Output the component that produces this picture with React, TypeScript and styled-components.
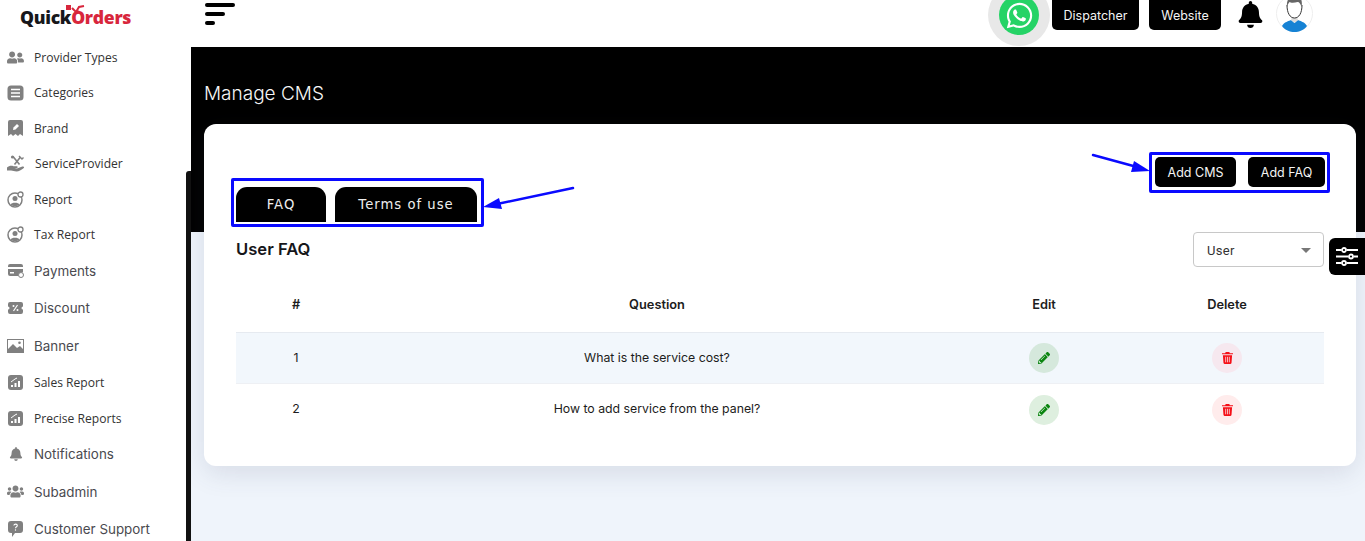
import React from "react";
import styled, { createGlobalStyle } from "styled-components";
import { FaBell, FaPencilAlt, FaUserFriends, FaUsers, FaWhatsapp } from "react-icons/fa";

const GlobalStyle = createGlobalStyle`
  html, body {
    margin: 0;
    height: 100%;
    overflow: hidden;
    background: #fff;
    font-family: "Inter", "Liberation Sans", sans-serif;
  }
  * { box-sizing: border-box; }
`;

const Page = styled.div`
  display: flex;
  height: 541px;
  overflow: hidden;
  position: relative;
`;

const Sidebar = styled.aside`
  background: #fff;
  flex: 0 0 191px;
  overflow: hidden;
  position: relative;
`;

const ScrollThumb = styled.div`
  background: #111;
  border-radius: 3px 0 0 0;
  bottom: 0;
  position: absolute;
  right: 0;
  top: 171px;
  width: 5px;
`;

const Logo = styled.div`
  align-items: flex-end;
  display: flex;
  font-family: "Open Sans", sans-serif;
  font-size: 17.6px;
  font-weight: 800;
  height: 39px;
  letter-spacing: -0.3px;
  line-height: 1;
  padding: 0 0 12px 20px;
  position: relative;
`;

const LogoBlack = styled.span`
  color: #17171b;
`;

const LogoRed = styled.span`
  color: #d8263c;
`;

const LogoCourier = styled.svg`
  left: 65px;
  position: absolute;
  top: 4px;
`;

const NavItem = styled.div<{ $tall?: boolean }>`
  align-items: center;
  color: ${(p) => (p.$tall ? "#4a4a4f" : "#333")};
  display: flex;
  font-family: ${(p) => (p.$tall ? '"Inter", sans-serif' : '"Open Sans", sans-serif')};
  font-size: ${(p) => (p.$tall ? "13.4px" : "12.1px")};
  gap: 10px;
  height: ${(p) => (p.$tall ? "37.5px" : "35.5px")};
  padding-left: 7px;
  padding-top: ${(p) => (p.$tall ? "0" : "1px")};
`;

const NavIcon = styled.span`
  align-items: center;
  color: #808080;
  display: flex;
  flex: 0 0 17px;
  height: 17px;
  justify-content: center;
`;

const Main = styled.main`
  background: linear-gradient(#000 232px, #eff4fb 232px);
  flex: 1;
  min-width: 0;
`;

const Topbar = styled.header`
  align-items: flex-start;
  background: #fff;
  display: flex;
  height: 47px;
  justify-content: space-between;
  overflow: hidden;
  padding: 0 52px 0 14px;
`;

const Burger = styled.div`
  display: flex;
  flex-direction: column;
  gap: 5px;
  padding-top: 3px;
`;

const BurgerBar = styled.span<{ $width: number }>`
  background: #000;
  border-radius: 2px;
  display: block;
  height: 4px;
  width: ${(p) => p.$width}px;
`;

const TopActions = styled.div`
  align-items: flex-start;
  display: flex;
`;

const WhatsappHalo = styled.div`
  align-items: center;
  background: #e8e8e8;
  border-radius: 50%;
  display: flex;
  height: 62px;
  justify-content: center;
  margin-right: 2px;
  margin-top: -16px;
  width: 62px;
`;

const WhatsappBadge = styled.div`
  align-items: center;
  background: #25d366;
  border-radius: 50%;
  color: #fff;
  display: flex;
  height: 40px;
  justify-content: center;
  width: 40px;
`;

const TopButton = styled.button<{ $width: number }>`
  background: #000;
  border: 0;
  border-radius: 0 0 5px 5px;
  color: #f4f4f4;
  font-family: "Inter", sans-serif;
  font-size: 12.5px;
  height: 30px;
  margin-right: 10px;
  padding: 0;
  width: ${(p) => p.$width}px;
`;

const BellWrap = styled.div`
  color: #000;
  display: flex;
  margin: 1px 12.5px 0 5.5px;
`;

const Avatar = styled.svg`
  display: block;
  margin-top: -5px;
`;

const Hero = styled.div`
  color: #f6f6f6;
  font-size: 19px;
  font-weight: 300;
  height: 77px;
  line-height: 24px;
  padding: 35px 0 0 13px;
`;

const Card = styled.section`
  background: #fff;
  border-radius: 12px;
  box-shadow: 0 8px 26px rgba(60, 70, 100, 0.13);
  height: 342px;
  margin: 0 9px 0 13px;
  padding: 28px 32px 0;
`;

const TopRow = styled.div`
  align-items: flex-end;
  display: flex;
  height: 75px;
  justify-content: space-between;
`;

const Annotated = styled.div`
  border: 3px solid #0a0aff;
  border-radius: 2px;
  display: flex;
  position: relative;
`;

const TabsBox = styled(Annotated)`
  align-items: flex-end;
  gap: 9px;
  height: 49px;
  margin-left: -5px;
  padding: 0 4px 2px 2px;
`;

const ActionsBox = styled(Annotated)`
  align-self: flex-start;
  gap: 12px;
  height: 41px;
  margin-right: -6px;
  padding: 2px 2px 3px 3px;
`;

const Arrow = styled.svg`
  overflow: visible;
  position: absolute;
`;

const TabsArrow = styled(Arrow)`
  left: 249px;
  top: 6px;
`;

const ActionsArrow = styled(Arrow)`
  left: -60px;
  top: -1px;
`;

const Tab = styled.button<{ $width: number }>`
  background: #000;
  border: 0;
  border-radius: 11px 11px 0 0;
  color: #eee;
  font-family: "DejaVu Sans", sans-serif;
  font-size: 13.2px;
  height: 35px;
  letter-spacing: 1px;
  padding: 0;
  width: ${(p) => p.$width}px;
`;

const ActionButton = styled.button<{ $width: number }>`
  background: #000;
  border: 0;
  border-radius: 5px;
  color: #f4f4f4;
  font-family: "Inter", sans-serif;
  font-size: 12.5px;
  height: 30px;
  padding: 0;
  width: ${(p) => p.$width}px;
`;

const SectionHead = styled.div`
  align-items: center;
  display: flex;
  height: 35px;
  justify-content: space-between;
  margin-top: 5px;
`;

const SectionTitle = styled.h2`
  color: #16161a;
  font-size: 16.6px;
  font-weight: 600;
  margin: -1px 0 0;
`;

const Select = styled.div`
  align-items: center;
  border: 1px solid #c8c8c8;
  border-radius: 4px;
  color: #333;
  display: flex;
  font-family: "Roboto", sans-serif;
  font-size: 13px;
  height: 35px;
  justify-content: space-between;
  letter-spacing: 0.3px;
  padding: 1px 12px 0 13px;
  width: 131px;
`;

const Caret = styled.span`
  border-left: 5px solid transparent;
  border-right: 5px solid transparent;
  border-top: 5px solid #777;
  display: block;
`;

const TableRow = styled.div<{ $striped?: boolean; $head?: boolean }>`
  align-items: center;
  background: ${(p) => (p.$striped ? "#f2f7fc" : "transparent")};
  border-bottom: ${(p) => (p.$head ? "1px solid #e6eaf0" : p.$striped ? "1px solid #eef0f4" : "0")};
  color: #1c1c20;
  display: grid;
  font-size: ${(p) => (p.$head ? "12.8px" : "12.3px")};
  font-weight: ${(p) => (p.$head ? 600 : 400)};
  grid-template-columns: 120px 602px 172px 194px;
  height: ${(p) => (p.$head ? "66px" : "51px")};
  padding-top: ${(p) => (p.$head ? "9px" : "0")};
  text-align: center;
`;

const TextCell = styled.div`
  padding-bottom: 2px;
`;

const RoundIcon = styled.span<{ $tone: "edit" | "delete"; $striped?: boolean }>`
  align-items: center;
  background: ${(p) =>
    p.$tone === "edit" ? (p.$striped ? "#d5e8dc" : "#deefdf") : p.$striped ? "#f6e8ef" : "#ffecec"};
  border-radius: 50%;
  color: ${(p) => (p.$tone === "edit" ? "#0a850f" : "#f50f17")};
  display: inline-flex;
  height: 30px;
  justify-content: center;
  width: 30px;
`;

const ToolCell = styled.div`
  display: flex;
  justify-content: center;
`;

const FilterTab = styled.div`
  align-items: center;
  background: #000;
  border-radius: 6px 0 0 6px;
  color: #fff;
  display: flex;
  height: 37px;
  justify-content: center;
  position: absolute;
  right: 0;
  top: 238px;
  width: 36px;
`;

const ListIcon = () => (
  <svg width="17" height="16" viewBox="0 0 17 16">
    <rect width="16" height="15" x="0.5" y="0.5" rx="3.5" fill="currentColor" />
    <path d="M4 4.500h9M4 8h9M4 11.500h9" stroke="#fff" strokeWidth="1.400" />
  </svg>
);

const BrandIcon = () => (
  <svg width="15" height="16" viewBox="0 0 15 16">
    <path d="M2 0h11a2 2 0 0 1 2 2v14l-3-2-2 2-2.500-2-2.500 2-2-2-3 2V2a2 2 0 0 1 2-2z" fill="currentColor" />
    <path d="M5 10l.5-2.500L9 4l2 2-3.500 3.500z" fill="#fff" />
  </svg>
);

const HandToolsIcon = () => (
  <svg width="18" height="18" viewBox="0 0 18 18">
    <path d="M0 12.500c2-1.800 4.500-2 6.500-1.200h3.200c1.400 0 1.400 1.700 0 1.700H7.500l2.500.4 5.300-1.900c1.700-.5 2.400.8 1.200 1.700-2.400 1.900-4.500 3.300-7 3.300-2.200 0-3.500-1-5.500-1H0z" fill="currentColor" />
    <path d="M6 1.500l6.500 8M13.500 2L7.500 9.500" stroke="currentColor" strokeWidth="1.600" fill="none" />
    <circle cx="5.500" cy="2" r="1.600" fill="currentColor" />
    <path d="M12 1l3 3 1.500-1.500" stroke="currentColor" strokeWidth="1.400" fill="none" />
  </svg>
);

const PersonRingIcon = () => (
  <svg width="17" height="17" viewBox="0 0 17 17">
    <circle cx="8" cy="9" r="7" fill="none" stroke="currentColor" strokeWidth="1.500" />
    <circle cx="8" cy="7.500" r="2.500" fill="currentColor" />
    <path d="M3.500 13.500c1-2.500 8-2.500 9 0-2 2-7 2-9 0z" fill="currentColor" />
    <circle cx="13.500" cy="3.500" r="2.500" fill="#fff" stroke="currentColor" strokeWidth="1.300" />
  </svg>
);

const CardCheckIcon = () => (
  <svg width="16" height="14" viewBox="0 0 16 14">
    <path d="M0 2a2 2 0 0 1 2-2h11a2 2 0 0 1 2 2v1H0zM0 5h15v3.500A4 4 0 0 0 10 12H2a2 2 0 0 1-2-2z" fill="currentColor" />
    <circle cx="13" cy="11" r="2.500" fill="#fff" stroke="currentColor" strokeWidth="1" />
    <rect x="2" y="8" width="4" height="1.500" fill="#fff" />
  </svg>
);

const TicketIcon = () => (
  <svg width="15" height="12" viewBox="0 0 15 12">
    <path d="M2 0h11a2 2 0 0 1 2 2v2.500a1.500 1.500 0 0 0 0 3V10a2 2 0 0 1-2 2H2a2 2 0 0 1-2-2V7.500a1.500 1.500 0 0 0 0-3V2a2 2 0 0 1 2-2z" fill="currentColor" />
    <path d="M5.500 9l4-6" stroke="#fff" strokeWidth="1.200" />
    <circle cx="5.500" cy="4" r="1" fill="#fff" />
    <circle cx="9.500" cy="8" r="1" fill="#fff" />
  </svg>
);

const PictureIcon = () => (
  <svg width="17" height="14" viewBox="0 0 17 14">
    <path d="M0 0h17v14H0z" fill="currentColor" />
    <path d="M1 1h15v9l-3-3-3 2-4-4-5 5z" fill="#fff" />
    <circle cx="12.500" cy="3.800" r="1.300" fill="currentColor" />
  </svg>
);

const ChartIcon = () => (
  <svg width="15" height="15" viewBox="0 0 15 15">
    <rect width="15" height="15" rx="3" fill="currentColor" />
    <path d="M3 12v-2h2v2zM6.500 12V8h2v4zM10 12V6h2v6z" fill="#fff" />
    <path d="M3 7l4-3 2-1" stroke="#fff" strokeWidth="1" fill="none" />
  </svg>
);

const QuestionIcon = () => (
  <svg width="15" height="16" viewBox="0 0 15 16">
    <path d="M3 0h9a3 3 0 0 1 3 3v6a3 3 0 0 1-3 3H7l-3 4v-4H3a3 3 0 0 1-3-3V3a3 3 0 0 1 3-3z" fill="currentColor" />
    <path d="M5.800 4.500c.3-1.800 3.500-1.800 3.500 0 0 1.300-1.800 1.300-1.800 2.800" stroke="#fff" strokeWidth="1.100" fill="none" />
    <circle cx="7.500" cy="9" r=".7" fill="#fff" />
  </svg>
);

const SlidersIcon = () => (
  <svg width="22" height="19" viewBox="0 0 22 19" fill="none" stroke="#fff" strokeWidth="1.800">
    <path d="M0 3h5.500M10.500 3H22M0 9.500h12.500M17.500 9.500H22M0 16h5.500M10.500 16H22" />
    <circle cx="8" cy="3" r="2" />
    <circle cx="15" cy="9.500" r="2" />
    <circle cx="8" cy="16" r="2" />
  </svg>
);

const TrashIcon = () => (
  <svg width="11" height="12" viewBox="0 0 12 13">
    <path d="M4 0h4l.5 1.200H12v1.300H0V1.200h3.500z" fill="currentColor" />
    <path d="M1 3.500h10l-.6 8.300a1.200 1.200 0 0 1-1.200 1.200H2.800a1.200 1.200 0 0 1-1.200-1.200z" fill="currentColor" />
    <path d="M4 5.200v6M6 5.200v6M8 5.200v6" stroke="#fff" strokeWidth=".9" opacity=".85" />
  </svg>
);

const navItems: { label: string; icon: React.ReactNode; tall?: boolean }[] = [
  { label: "Provider Types", icon: <FaUserFriends size={17} /> },
  { label: "Categories", icon: <ListIcon /> },
  { label: "Brand", icon: <BrandIcon /> },
  { label: "ServiceProvider", icon: <HandToolsIcon /> },
  { label: "Report", icon: <PersonRingIcon /> },
  { label: "Tax Report", icon: <PersonRingIcon /> },
  { label: "Payments", icon: <CardCheckIcon />, tall: true },
  { label: "Discount", icon: <TicketIcon />, tall: true },
  { label: "Banner", icon: <PictureIcon />, tall: true },
  { label: "Sales Report", icon: <ChartIcon /> },
  { label: "Precise Reports", icon: <ChartIcon /> },
  { label: "Notifications", icon: <FaBell size={14} />, tall: true },
  { label: "Subadmin", icon: <FaUsers size={17} />, tall: true },
  { label: "Customer Support", icon: <QuestionIcon />, tall: true },
];

const faqs = ["What is the service cost?", "How to add service from the panel?"];

export default function App() {
  return (
    <>
      <GlobalStyle />
      <Page>
        <Sidebar>
          <Logo>
            <LogoBlack>Quick</LogoBlack>
            <LogoRed>Orders</LogoRed>
            <LogoCourier width="22" height="11" viewBox="0 0 22 11">
              <rect x="1" y="1" width="5" height="5" fill="#d8263c" />
              <path d="M7 4l4 4 3-5 5-1M13 7l3 3" stroke="#d8263c" strokeWidth="2" fill="none" />
            </LogoCourier>
          </Logo>
          {navItems.map((item) => (
            <NavItem key={item.label} $tall={item.tall}>
              <NavIcon>{item.icon}</NavIcon>
              {item.label}
            </NavItem>
          ))}
          <ScrollThumb />
        </Sidebar>

        <Main>
          <Topbar>
            <Burger>
              <BurgerBar $width={30} />
              <BurgerBar $width={20} />
              <BurgerBar $width={10} />
            </Burger>
            <TopActions>
              <WhatsappHalo>
                <WhatsappBadge>
                  <FaWhatsapp size={29} />
                </WhatsappBadge>
              </WhatsappHalo>
              <TopButton $width={87}>Dispatcher</TopButton>
              <TopButton $width={72}>Website</TopButton>
              <BellWrap>
                <FaBell size={27} />
              </BellWrap>
              <Avatar width="37" height="37" viewBox="0 0 37 37">
                <circle cx="18.500" cy="18.500" r="18" fill="#fff" stroke="#eee" />
                <path d="M6 31c2-4 7-5 9-6l3.500 3 3.500-3c2 1 7 2 9 6-3 4-8 6-12.500 6S9 35 6 31z" fill="#1682d4" />
                <path d="M15 25l3.500 3 3.500-3-1-3h-5z" fill="#ddd" />
                <path d="M11 10c0 8 3 13 7.500 13S26 18 26 10" fill="#fff" stroke="#333" strokeWidth="1" />
                <path d="M11 12c-1-7 3-12 8-12s8 5 6.500 12c-1-3-2-5-4-5-3 1-7 1-8 0-1 1-2 3-2.500 5z" fill="#666" />
              </Avatar>
            </TopActions>
          </Topbar>

          <Hero>Manage CMS</Hero>

          <Card>
            <TopRow>
              <TabsBox>
                <Tab $width={90}>FAQ</Tab>
                <Tab $width={142}>Terms of use</Tab>
                <TabsArrow width="92" height="22" viewBox="0 0 92 22">
                  <path d="M90 1L14 17" stroke="#0a0aff" strokeWidth="2.500" strokeLinecap="round" />
                  <path d="M0 20l16-9 3 11z" fill="#0a0aff" />
                </TabsArrow>
              </TabsBox>
              <ActionsBox>
                <ActionsArrow width="60" height="20" viewBox="0 0 60 20">
                  <path d="M1 1l44 12" stroke="#0a0aff" strokeWidth="2.500" strokeLinecap="round" />
                  <path d="M58 17L42 7l-3 11z" fill="#0a0aff" />
                </ActionsArrow>
                <ActionButton $width={81}>Add CMS</ActionButton>
                <ActionButton $width={77}>Add FAQ</ActionButton>
              </ActionsBox>
            </TopRow>

            <SectionHead>
              <SectionTitle>User FAQ</SectionTitle>
              <Select>
                User
                <Caret />
              </Select>
            </SectionHead>

            <TableRow $head>
              <div>#</div>
              <div>Question</div>
              <div>Edit</div>
              <div>Delete</div>
            </TableRow>
            {faqs.map((question, i) => (
              <TableRow key={question} $striped={i === 0}>
                <TextCell>{i + 1}</TextCell>
                <TextCell>{question}</TextCell>
                <ToolCell>
                  <RoundIcon $tone="edit" $striped={i === 0}>
                    <FaPencilAlt size={12} />
                  </RoundIcon>
                </ToolCell>
                <ToolCell>
                  <RoundIcon $tone="delete" $striped={i === 0}>
                    <TrashIcon />
                  </RoundIcon>
                </ToolCell>
              </TableRow>
            ))}
          </Card>
        </Main>

        <FilterTab>
          <SlidersIcon />
        </FilterTab>
      </Page>
    </>
  );
}
